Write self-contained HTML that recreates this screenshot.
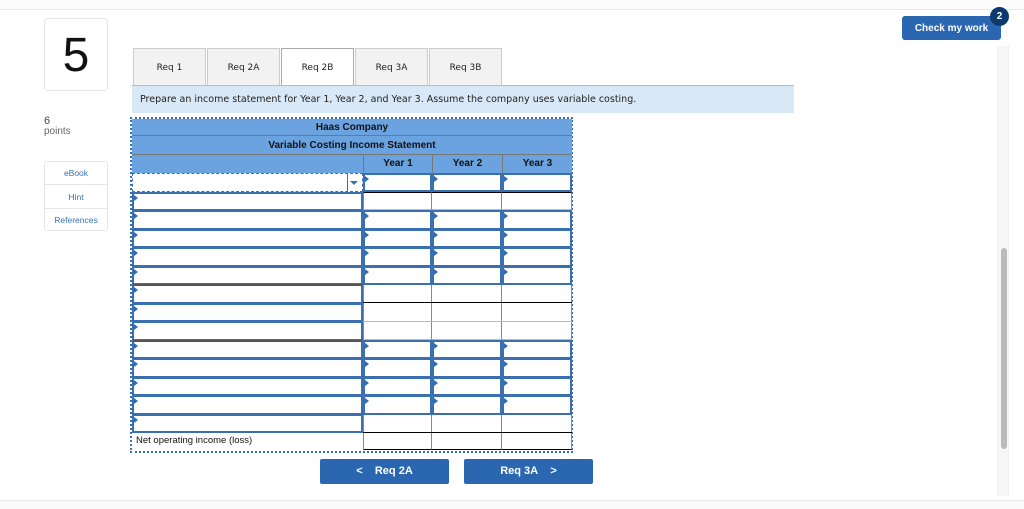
<!DOCTYPE html>
<html><head><meta charset="utf-8"><style>
*{box-sizing:border-box;margin:0;padding:0}
body{width:1024px;height:509px;background:#fff;position:relative;overflow:hidden;font-family:"Liberation Sans",sans-serif}
.a{position:absolute}
.tab{position:absolute;top:48px;height:38px;width:73px;background:#f2f2f2;border:1px solid #ccc;border-bottom:none;font-family:"DejaVu Sans",sans-serif;font-size:9px;text-align:center;line-height:38px;color:#222}
.hd{position:absolute;background:#6aa3e0;font-weight:bold;font-size:10px;text-align:center;color:#111}
.lb{position:absolute;left:132px;width:231px;border:2px solid #3a6fb0;background:#fff}
.yi{position:absolute;border:2px solid #3a6fb0;background:#fff}
.yo{position:absolute;border-right:1px solid #888;border-bottom:1px solid #bbb;background:#fff}
.mk{position:absolute;left:0;top:1px;width:0;height:0;border-top:3px solid transparent;border-bottom:3px solid transparent;border-left:4px solid #2d6db5}
.btn{position:absolute;top:459px;height:25px;background:#2a67b0;color:#fff;font-weight:bold;font-size:11px;text-align:center;line-height:25px;border-radius:2px}
</style></head><body>
<div class="a" style="left:0;top:0;width:1024px;height:10px;border-bottom:1px solid #e8e8e8;background:#fcfcfc"></div>
<div class="a" style="left:44px;top:18px;width:64px;height:73px;border:1px solid #e6e6e6;border-radius:4px;font-size:48px;text-align:center;line-height:73px;color:#111">5</div>
<div class="a" style="left:44px;top:115px;font-size:11px;color:#2a4d7a">6</div>
<div class="a" style="left:44px;top:126px;font-size:10px;color:#666">points</div>
<div class="a" style="left:44px;top:161px;width:64px;height:70px;border:1px solid #e6e6e6;border-radius:3px;font-size:8.5px;color:#3a72b8;text-align:center">
<div style="height:23px;line-height:23px;border-bottom:1px solid #e6e6e6">eBook</div>
<div style="height:24px;line-height:24px;border-bottom:1px solid #e6e6e6">Hint</div>
<div style="height:22px;line-height:22px">References</div></div>
<div class="tab" style="left:133px">Req 1</div>
<div class="tab" style="left:207px">Req 2A</div>
<div class="tab" style="left:281px;background:#fff;border-color:#aaa">Req 2B</div>
<div class="tab" style="left:355px">Req 3A</div>
<div class="tab" style="left:429px">Req 3B</div>
<div class="a" style="left:132px;top:85px;width:662px;height:1px;background:#bbb"></div>
<div class="a" style="left:132px;top:86px;width:662px;height:27px;background:#d9e8f7;font-family:'DejaVu Sans',sans-serif;font-size:9.5px;line-height:27px;padding-left:8px;color:#222;white-space:nowrap">Prepare an income statement for Year 1, Year 2, and Year 3. Assume the company uses variable costing.</div>
<div class="a" style="left:130px;top:117px;width:443px;height:336px;border:2px dotted #3a6fb0"></div>
<div class="hd" style="left:132px;top:119px;width:440px;height:17px;line-height:17px;border-bottom:1px solid #777">Haas Company</div>
<div class="hd" style="left:132px;top:136px;width:440px;height:19px;line-height:19px;border-bottom:1px solid #777">Variable Costing Income Statement</div>
<div class="hd" style="left:132px;top:155px;width:231px;height:18px"></div>
<div class="hd" style="left:363px;top:155px;width:69px;height:18px;line-height:18px;border-left:1px solid #777">Year 1</div>
<div class="hd" style="left:432px;top:155px;width:70px;height:18px;line-height:18px;border-left:1px solid #777">Year 2</div>
<div class="hd" style="left:502px;top:155px;width:70px;height:18px;line-height:18px;border-left:1px solid #777">Year 3</div>
<div class="a" style="left:132px;top:173px;width:231px;height:19px;border:1px dashed #3a6fb0;background:#fff"><div class="a" style="right:0;top:0;width:15px;height:17px;border-left:1px solid #3a6fb0"></div><div class="a" style="right:4px;top:7px;border-left:4px solid transparent;border-right:4px solid transparent;border-top:4px solid #3a6fb0"></div></div>
<div class="yi" style="left:363px;top:173px;width:69px;height:19px"><i class="mk"></i></div>
<div class="yi" style="left:432px;top:173px;width:70px;height:19px"><i class="mk"></i></div>
<div class="yi" style="left:502px;top:173px;width:70px;height:19px"><i class="mk"></i></div>
<div class="lb" style="top:192px;height:19px"><i class="mk"></i></div>
<div class="lb" style="top:210px;height:20px"><i class="mk"></i></div>
<div class="lb" style="top:229px;height:19px"><i class="mk"></i></div>
<div class="lb" style="top:247px;height:20px"><i class="mk"></i></div>
<div class="lb" style="top:266px;height:19px"><i class="mk"></i></div>
<div class="lb" style="top:284px;height:20px;border-top-color:#555"><i class="mk"></i></div>
<div class="lb" style="top:303px;height:19px"><i class="mk"></i></div>
<div class="lb" style="top:321px;height:20px"><i class="mk"></i></div>
<div class="lb" style="top:340px;height:19px;border-top-color:#555"><i class="mk"></i></div>
<div class="lb" style="top:358px;height:20px"><i class="mk"></i></div>
<div class="lb" style="top:377px;height:19px"><i class="mk"></i></div>
<div class="lb" style="top:395px;height:20px"><i class="mk"></i></div>
<div class="lb" style="top:414px;height:19px"><i class="mk"></i></div>
<div class="a" style="left:133px;top:432px;width:230px;height:18px;font-size:9.5px;line-height:18px;padding-left:3px;color:#111">Net operating income (loss)</div>
<div class="yo" style="left:363px;top:192px;width:69px;height:18px;border-top:1px solid #000;border-left:1px solid #888"></div>
<div class="yo" style="left:432px;top:192px;width:70px;height:18px;border-top:1px solid #000"></div>
<div class="yo" style="left:502px;top:192px;width:70px;height:18px;border-top:1px solid #000"></div>
<div class="yo" style="left:363px;top:284px;width:69px;height:56px;border-left:1px solid #888"></div>
<div class="yo" style="left:432px;top:284px;width:70px;height:56px"></div>
<div class="yo" style="left:502px;top:284px;width:70px;height:56px"></div>
<div class="a" style="left:363px;top:302px;width:209px;height:1px;background:#000"></div>
<div class="a" style="left:363px;top:321px;width:209px;height:1px;background:#bbb"></div>
<div class="yo" style="left:363px;top:414px;width:69px;height:36px;border-left:1px solid #888;border-bottom:1px solid #000"></div>
<div class="yo" style="left:432px;top:414px;width:70px;height:36px;border-bottom:1px solid #000"></div>
<div class="yo" style="left:502px;top:414px;width:70px;height:36px;border-bottom:1px solid #000"></div>
<div class="a" style="left:363px;top:432px;width:209px;height:1px;background:#000"></div>
<div class="yi" style="left:363px;top:210px;width:69px;height:20px"><i class="mk"></i></div><div class="yi" style="left:432px;top:210px;width:70px;height:20px"><i class="mk"></i></div><div class="yi" style="left:502px;top:210px;width:70px;height:20px"><i class="mk"></i></div>
<div class="yi" style="left:363px;top:229px;width:69px;height:19px"><i class="mk"></i></div><div class="yi" style="left:432px;top:229px;width:70px;height:19px"><i class="mk"></i></div><div class="yi" style="left:502px;top:229px;width:70px;height:19px"><i class="mk"></i></div>
<div class="yi" style="left:363px;top:247px;width:69px;height:20px"><i class="mk"></i></div><div class="yi" style="left:432px;top:247px;width:70px;height:20px"><i class="mk"></i></div><div class="yi" style="left:502px;top:247px;width:70px;height:20px"><i class="mk"></i></div>
<div class="yi" style="left:363px;top:266px;width:69px;height:19px"><i class="mk"></i></div><div class="yi" style="left:432px;top:266px;width:70px;height:19px"><i class="mk"></i></div><div class="yi" style="left:502px;top:266px;width:70px;height:19px"><i class="mk"></i></div>
<div class="yi" style="left:363px;top:340px;width:69px;height:19px"><i class="mk"></i></div><div class="yi" style="left:432px;top:340px;width:70px;height:19px"><i class="mk"></i></div><div class="yi" style="left:502px;top:340px;width:70px;height:19px"><i class="mk"></i></div>
<div class="yi" style="left:363px;top:358px;width:69px;height:20px"><i class="mk"></i></div><div class="yi" style="left:432px;top:358px;width:70px;height:20px"><i class="mk"></i></div><div class="yi" style="left:502px;top:358px;width:70px;height:20px"><i class="mk"></i></div>
<div class="yi" style="left:363px;top:377px;width:69px;height:19px"><i class="mk"></i></div><div class="yi" style="left:432px;top:377px;width:70px;height:19px"><i class="mk"></i></div><div class="yi" style="left:502px;top:377px;width:70px;height:19px"><i class="mk"></i></div>
<div class="yi" style="left:363px;top:395px;width:69px;height:20px"><i class="mk"></i></div><div class="yi" style="left:432px;top:395px;width:70px;height:20px"><i class="mk"></i></div><div class="yi" style="left:502px;top:395px;width:70px;height:20px"><i class="mk"></i></div>
<div class="btn" style="left:320px;width:129px">&lt;&nbsp;&nbsp;&nbsp; Req 2A</div>
<div class="btn" style="left:464px;width:129px">Req 3A&nbsp;&nbsp;&nbsp; &gt;</div>
<div class="a" style="left:0;top:500px;width:1024px;height:9px;border-top:1px solid #e8e8e8;background:#fafafa"></div>
<div class="a" style="left:902px;top:16px;width:99px;height:24px;background:#2a67b0;border-radius:3px;color:#fff;font-weight:bold;font-size:10px;text-align:center;line-height:25px">Check my work</div>
<div class="a" style="left:990px;top:7px;width:19px;height:19px;border-radius:50%;background:#0d3a6e;color:#fff;font-weight:bold;font-size:10px;text-align:center;line-height:19px">2</div>
<div class="a" style="left:997px;top:46px;width:12px;height:450px;background:#f7f7f7;border-left:1px solid #eee;border-right:1px solid #eee"></div>
<div class="a" style="left:1001px;top:248px;width:6px;height:201px;background:#bbb;border-radius:3px"></div>
</body></html>
